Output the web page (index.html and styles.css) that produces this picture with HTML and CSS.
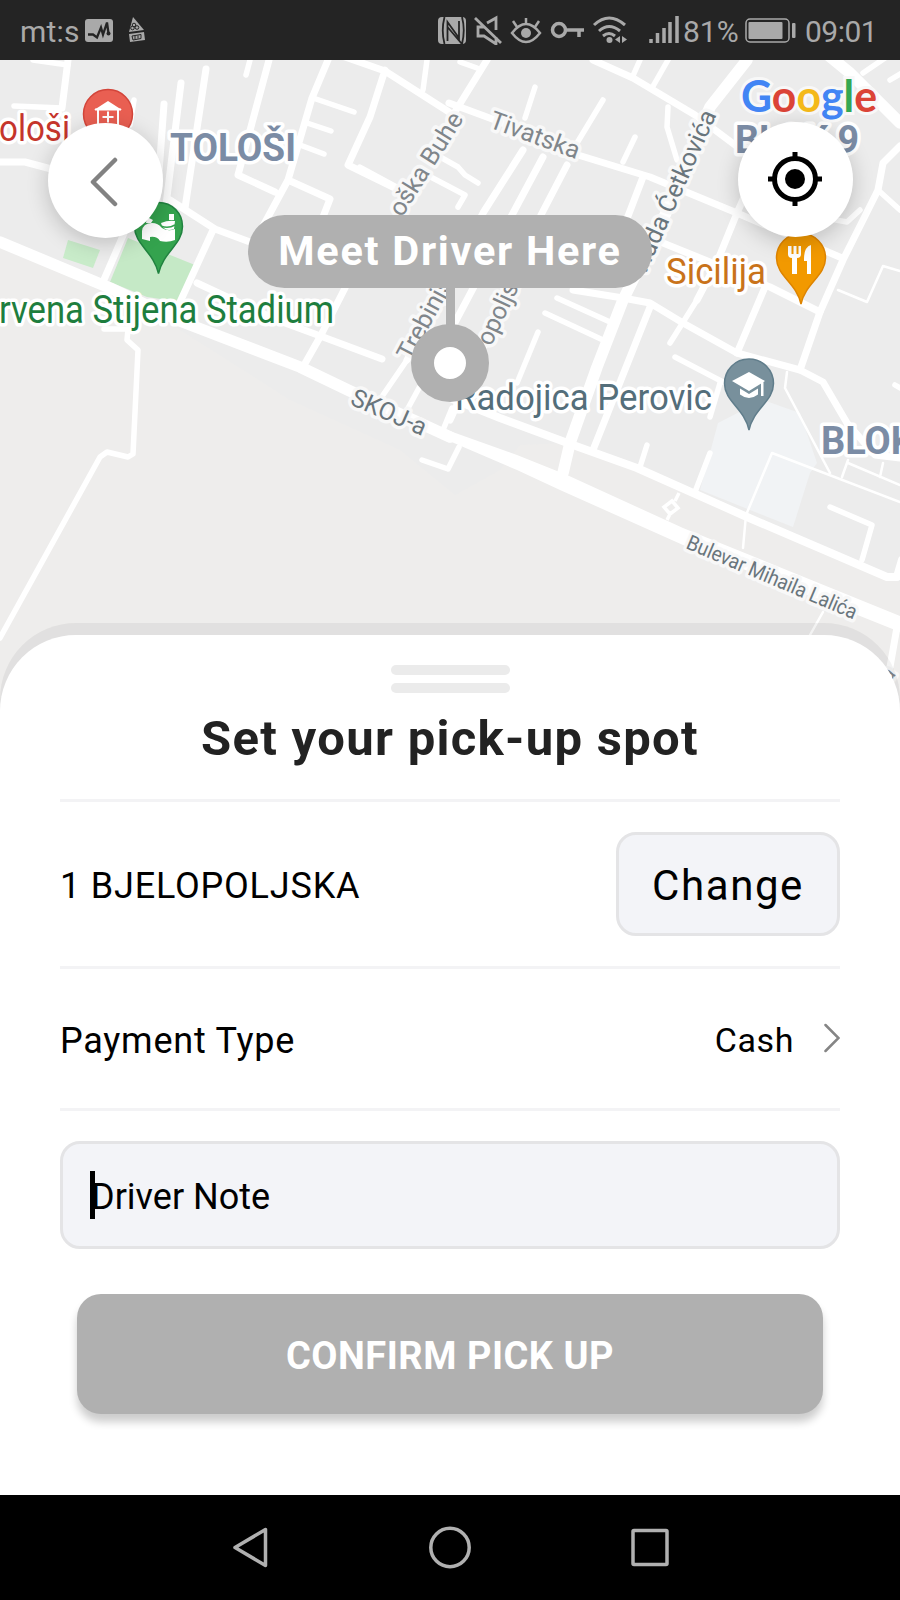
FILE: index.html
```html
<!DOCTYPE html>
<html lang="en">
<head>
<meta charset="utf-8">
<title>Set your pick-up spot</title>
<link rel="stylesheet" href="styles.css">
</head>
<body>
<header class="status">
  <div class="status-group">
    <span class="carrier">mt:s</span>
    <svg class="ic-pulse" width="28" height="23" viewBox="0 0 28 23"><rect width="28" height="23" rx="3" fill="#a9a9a9"/><path d="M3 15.500h5l4 3 4-10 2 7 4-12 1.500 11" fill="none" stroke="#242424" stroke-width="2.300"/><circle cx="23.500" cy="14.500" r="2" fill="#242424"/></svg>
    <svg class="ic-hazard" width="18" height="26" viewBox="0 0 18 26"><path d="M5 0 16 13 1 15z" fill="#a9a9a9"/><g fill="none" stroke="#242424" stroke-width="1"><circle cx="6" cy="8" r="1.800"/><circle cx="4.500" cy="11" r="1.800"/><circle cx="9" cy="10.500" r="1.800"/></g><path d="m1 17 15-2 1 8-15 2z" fill="#a9a9a9"/><path d="m4 19 9-1.500v4L5 23z" fill="none" stroke="#242424"/><path d="M7 19v3m3-3.500v3" stroke="#242424"/></svg>
  </div>
  <div class="status-group">
    <svg width="230" height="30" viewBox="437 15 230 30" fill="none" stroke="#a9a9a9" stroke-width="2.500">
      <rect x="438" y="17" width="28" height="27" rx="4" fill="#a9a9a9" stroke="none"/>
      <path d="M444.500 17q-3.500 13.500 0 27M447.500 41V22l11.500 16V21M462 17q3.500 13 0 27L447.500 27" stroke="#242424" stroke-width="1.800"/>
      <path d="M475 18 501 43M484 27h-6v9h6l12 8V37M487 23l9-5v12" stroke-width="2.800"/>
      <path d="M512 33q14-18 28 0-14 18-28 0zM526 18v6M513 21l4 6M539 21l-4 6"/><circle cx="526" cy="33" r="5" fill="#a9a9a9" stroke="none"/>
      <circle cx="559" cy="30" r="6.500" stroke-width="3.500"/><path d="M566 30h18M579 30v7" stroke-width="3.500"/>
      <path d="M594 25q15-14 31 0M599 31q10-9 21 0M603 36q6-5 12 0" stroke-width="3"/><circle cx="609.500" cy="40" r="3" fill="#a9a9a9" stroke="none"/>
      <path d="M620 36v7l-5-3.500zM622 36v7l5-3.500z" fill="#a9a9a9" stroke="none"/>
      <path d="M651 43v-4M657.500 43V33M664 43V28" stroke-width="3.500"/>
    </svg>
    <svg width="14" height="30" viewBox="667 15 14 30" stroke="#a9a9a9" stroke-width="3.500"><path d="M670 43V22M677 43V16"/></svg>
    <span class="percent">81%</span>
    <svg class="ic-battery" width="52" height="26" viewBox="0 0 52 26"><rect x="1" y="1" width="43" height="23" rx="4" fill="none" stroke="#a9a9a9" stroke-width="1.500"/><rect x="3.500" y="4" width="34" height="17" rx="1" fill="#a9a9a9"/><rect x="47" y="5" width="3.500" height="15" rx="1" fill="#a9a9a9"/></svg>
    <span class="clock">09:01</span>
  </div>
</header>

<main class="map">
  <svg class="map-canvas" width="900" height="660" viewBox="0 60 900 660">
    <rect y="60" width="900" height="660" fill="#ececec"/>
    <path d="M0 242 180 330 290 400 400 450 455 495 500 470 520 445 567 443 900 582V720H0z" fill="#eeedec"/>
    <path d="M718 423 763 400 800 413 817 463 810 473 793 527 700 490z" fill="#f1f3f5"/>
    <path d="M68 240 100 250 93 268 63 258z" fill="#c8ebc9"/>
    <path d="M128 238 195 265 181 302 147 297 110 282z" fill="#c5e9c6"/>

    <g class="road w3">
      <path d="M787 372 785 388 830 473M743 548 746 515 772 453 900 502M848 460 842 477M848 463 900 485M883 463 880 477"/>
      <path d="M838 290 867 302 883 266 900 271"/>
      <path d="M823 612 810 635"/>
    </g>
    <path d="M679 493 675 501M672 501 678 508 670 514 664 507zM670 514 667 520" fill="none" stroke="#fff" stroke-width="3.500"/>
    <g class="road w5">
      <path d="M33 60 68 65M14 106 62 108M134 100 130 125M250 60 246 75M313 98 354 112M307 123 331 131M300 145 324 154"/>
      <path d="M442 158 458 167 465 175 478 183M427 175 465 195 458 207M668 107 667 127 677 160M460 62 477 68M427 60 423 90"/>
      <path d="M640 60 632 78M668 60 652 88M635 137 623 162M557 298 610 322M545 313 603 340M538 332 517 383M675 357 723 382M720 383 710 417"/>
      <path d="M647 445 640 467M710 453 695 492M830 507 872 525 862 560M860 210 847 222 825 218M863 73 885 58M890 80 900 74"/>
      <path d="M422 460 448 469 459 447M878 190 900 210M535 87 525 118M603 100 577 143"/>
      <path d="M104 329H128L127 340 138 350 133 454 128 457 107 452 100 457 0 638"/>
      <path d="M697 300 670 343M895 385 900 388M407 360 383 395M425 377 407 410M452 408 443 430"/>
    </g>
    <g class="road w6">
      <path d="M68 60 62 108M0 162H25L55 170M206 69 185 208M181 83 166 205M164 104 157 200"/>
      <path d="M269 60 238 175 275 192M328 60 312 98 288 180 262 228M288 180 330 199 323 217"/>
      <path d="M345 57 385 71 449 112M385 70 370 117 348 165 395 188M360 168 397 188M487 60 453 115M449 103 495 120 578 155 650 177 737 213 842 258"/>
      <path d="M523 150 483 213 407 360M543 157 512 215 443 345M567 165 541 215 505 300 450 420M643 177 615 250"/>
      <path d="M170 200 215 229 250 242 320 275M213 230 180 302M140 195 122 238 103 282M197 283 277 320 323 337 382 359M345 288 320 337 303 367"/>
      <path d="M593 60 633 78 695 115 735 145 765 165M573 290 623 298 650 303 683 323 737 353 800 370 823 382 847 423 875 455 900 458"/>
      <path d="M650 307 593 450M745 195 737 213 717 262 697 300M663 243 705 260 770 287 820 312M765 287 737 353"/>
      <path d="M900 146 883 163 878 190 843 260 820 312 800 370M897 627 890 667"/>
    </g>
    <g class="road w8"><path d="M450 398 500 418 573 445 637 468 747 517 887 577 897 577 902 560"/></g>
    <g class="road w10"><path d="M0 242 110 288 180 321 300 367 350 391 450 437"/><path d="M747 60 710 107 665 215 623 300 597 367 570 443 563 473M828 55 850 73 900 123"/></g>
    <path d="M447 430 517 455 567 475 683 528 900 616V632L683 545 560 490 517 470 447 440z" fill="#fff"/>

    <g class="label street">
      <text transform="translate(488 127) rotate(20)" textLength="94" lengthAdjust="spacingAndGlyphs">Tivatska</text>
      <text transform="translate(402 218) rotate(-58)" textLength="117" lengthAdjust="spacingAndGlyphs">oška Buhe</text>
      <text class="dark" transform="translate(644 278) rotate(-66)" textLength="179" lengthAdjust="spacingAndGlyphs">Vlada Ćetkovića</text>
      <text transform="translate(411 362) rotate(-62)" textLength="116" lengthAdjust="spacingAndGlyphs">Trebinjska</text>
      <text transform="translate(491 347) rotate(-65)" textLength="92" lengthAdjust="spacingAndGlyphs">opoljska</text>
      <text class="dark" transform="translate(349 404) rotate(23.600)" textLength="80" lengthAdjust="spacingAndGlyphs">SKOJ-a</text>
      <text class="dark small" transform="translate(685 548) rotate(23)" textLength="183" lengthAdjust="spacingAndGlyphs">Bulevar Mihaila Lalića</text>
      <text class="small" transform="translate(889 683) rotate(-50)">a</text>
    </g>
    <g class="label place">
      <text x="-1" y="141" textLength="71" lengthAdjust="spacingAndGlyphs" fill="#c5352c">ološi</text>
      <text class="big" x="-1" y="322.500" textLength="335" lengthAdjust="spacingAndGlyphs" fill="#1e7e3e">rvena Stijena Stadium</text>
      <text x="666" y="284" textLength="100" lengthAdjust="spacingAndGlyphs" fill="#c9731a">Sicilija</text>
      <text x="455" y="410" textLength="257" lengthAdjust="spacingAndGlyphs" fill="#546e7a">Radojica Perovic</text>
    </g>
    <g class="label district">
      <text x="170" y="160.500" textLength="126" lengthAdjust="spacingAndGlyphs">TOLOŠI</text>
      <text x="735" y="153" textLength="124" lengthAdjust="spacingAndGlyphs">BLOK 9</text>
      <text x="821" y="453.500">BLOK</text>
    </g>
    <text class="google" x="741" y="111.500" textLength="136" lengthAdjust="spacingAndGlyphs"><tspan fill="#4285f4">G</tspan><tspan fill="#db4437">o</tspan><tspan fill="#f4b91a">o</tspan><tspan fill="#4285f4">g</tspan><tspan fill="#34a853">l</tspan><tspan fill="#db4437">e</tspan></text>

    <circle cx="108" cy="114" r="24.500" fill="#e95f52" stroke="#d3453a" stroke-width="1.500"/>
    <path d="M94 110 108 101 122 110z" fill="#fff"/><path d="M98 109V128M118 109V128M108 111.500v11M102.500 117h11M95 109.500h26" fill="none" stroke="#fff" stroke-width="2"/>
    <path d="M158.500 202.500c-14 0-24 11-24 24 0 18 19 25 24 47 5-22 24-29 24-47 0-13-10-24-24-24z" fill="#34a34e" stroke="#218340" stroke-width="1.500"/>
    <path d="M142 231q1-8 10-8 6 0 10 5 6 4 13 1v11q-7 3-15 1-3-5-10-4v4l-8-2zM161 223q7-3 14-2l-1 8q-8 3-12-3zM169 214h5v6h-5zM147 217l6 3-2 3h-5z" fill="#fff"/>
    <path d="M161 226q7 3 14-1" fill="none" stroke="#34a34e" stroke-width="1.500"/>
    <path d="M801 233.500c-14 0-24.500 11-24.500 24.500 0 18 20 25 24.500 46 4.500-21 24.500-28 24.500-46 0-13.500-10.500-24.500-24.500-24.500z" fill="#f29900" stroke="#de8400" stroke-width="1.500"/>
    <path d="M788 246v8q0 4 4 4v16h5v-16q4 0 4-4v-8h-2.500v8h-2v-8h-3v8h-2v-8zM804 259q0-12 7-14v29h-4v-13h-3z" fill="#fff"/>
    <path d="M749 359c-14 0-24.500 11-24.500 24.500 0 18 20 25 24.500 46.500 4.500-21.500 24.500-28.500 24.500-46.500 0-13.500-10.500-24.500-24.500-24.500z" fill="#78909c" stroke="#607d8b" stroke-width="1.500"/>
    <path d="m732 381 17-9 16 9-16 10zM740 388.500l9 5.500 9-5.500v6q-9 7-18 0zM761 382h2.500v14H761z" fill="#fff"/>
  </svg>

  <button class="round back" aria-label="Back"><svg width="30" height="52" viewBox="0 0 30 52"><path d="M25 4 3 26l22 22" fill="none" stroke="#828282" stroke-width="4.500" stroke-linejoin="round" stroke-linecap="round"/></svg></button>
  <button class="round locate" aria-label="My location"><svg width="56" height="56" viewBox="0 0 56 56"><circle cx="28" cy="28" r="20.500" fill="none" stroke="#000" stroke-width="5"/><circle cx="28" cy="28" r="10" /><path d="M28 1v8M28 47v8M1 28h8M47 28h8" stroke="#000" stroke-width="5"/></svg></button>
  <div class="meet">
    <div class="meet-label">Meet Driver Here</div>
    <div class="meet-stem"></div>
    <div class="meet-dot"></div>
  </div>
</main>

<section class="sheet">
  <div class="handle"></div>
  <div class="handle"></div>
  <h1>Set your pick-up spot</h1>
  <div class="row address"><span class="street-name">1 BJELOPOLJSKA</span><button class="change">Change</button></div>
  <div class="row payment"><span class="pay-label">Payment Type</span><span class="cash">Cash</span><svg width="16" height="30" viewBox="0 0 16 30"><path d="M1.500 2 14.500 15 1.500 28" fill="none" stroke="#858585" stroke-width="2.500" stroke-linecap="round"/></svg></div>
  <div class="note"><span class="caret"></span><span class="note-text">Driver Note</span></div>
  <button class="confirm">CONFIRM PICK UP</button>
</section>

<nav class="nav">
  <svg width="40" height="44" viewBox="0 0 40 44"><path d="M5 21.500 35.500 3.500v36z"/></svg>
  <svg width="44" height="44" viewBox="0 0 44 44"><circle cx="22" cy="21.500" r="19.200"/></svg>
  <svg width="40" height="44" viewBox="0 0 40 44"><rect x="3" y="4.500" width="34" height="34" rx="1"/></svg>
</nav>
</body>
</html>
```
FILE: styles.css
```css
* { box-sizing: border-box; }
body { margin: 0; width: 900px; height: 1600px; overflow: hidden; display: flex; flex-direction: column; background: #fff; font-family: Roboto, sans-serif; color: #000; }
button { font: inherit; border: 0; padding: 0; color: inherit; }
svg { display: block; flex: none; }

.status { height: 60px; flex: none; background: #242424; color: #a9a9a9; display: flex; justify-content: space-between; padding: 0 24px 0 20px; font-size: 30px; line-height: 60px; }
.status-group { display: flex; align-items: center; white-space: nowrap; }
.carrier { width: 65px; padding-top: 3px; letter-spacing: 0.2px; }
.ic-pulse { margin-top: 1px; }
.ic-hazard { margin-left: 15px; }
.percent { width: 59px; margin-left: 2px; padding-top: 3px; }
.ic-battery { margin-left: 3px; margin-top: 1px; }
.clock { margin-left: 8px; padding-top: 3px; width: 72px; text-align: right; letter-spacing: -0.5px; margin-right: -1px; }

.map { position: relative; height: 660px; flex: none; }
.road { fill: none; stroke: #fff; stroke-linecap: round; stroke-linejoin: round; }
.w3 { stroke-width: 2.500; }
.w5 { stroke-width: 5.500; }
.w6 { stroke-width: 7; }
.w8 { stroke-width: 8; }
.w10 { stroke-width: 11.500; }
.label { paint-order: stroke; stroke: #fff; stroke-width: 7px; stroke-linejoin: round; }
.street { font-size: 25px; fill: #80868b; stroke: #f8f8f8; }
.street .dark { fill: #69757c; }
.street .small { font-size: 21px; }
.place { font-size: 36px; }
.place .big { font-size: 38px; }
.district { font-size: 38px; font-weight: 700; fill: #7b8ca5; }
.google { font: 700 44px Lato, sans-serif; paint-order: stroke; stroke: #f8f8f8; stroke-width: 6px; }

.round { position: absolute; width: 115px; height: 115px; border-radius: 50%; background: #fff; display: flex; align-items: center; justify-content: center; box-shadow: 0 5px 22px rgba(0,0,0,.2); }
.back { left: 47.5px; top: 63px; }
.back svg { margin-top: 2px; }
.locate { left: 738px; top: 62px; }
.locate svg { margin: -1px 0 0 -1px; }
.meet { position: absolute; left: 248px; top: 155px; width: 404px; display: flex; flex-direction: column; align-items: center; }
.meet-label { width: 404px; height: 73px; border-radius: 37px; background: #b0b0b0; color: #fff; font-size: 41.500px; line-height: 72px; font-weight: 700; letter-spacing: 1.700px; text-align: center; white-space: nowrap; }
.meet-stem { width: 9px; height: 38px; background: #b0b0b0; }
.meet-dot { width: 78px; height: 78px; margin-top: -2px; border: 23px solid #b0b0b0; border-radius: 50%; background: #fff; }

.sheet { position: relative; height: 860px; flex: none; margin-top: -85px; padding: 30px 60px 0; background: #fff; border-radius: 76px 76px 0 0; box-shadow: 0 -12px 0 rgba(0,0,0,.05); display: flex; flex-direction: column; align-items: stretch; }
.handle { width: 119px; height: 10px; border-radius: 5px; background: #ebebeb; align-self: center; margin-bottom: 8px; flex: none; }
h1 { margin: 0; height: 98px; padding-top: 8px; font-size: 49px; line-height: 60px; letter-spacing: 1.300px; color: #222; text-align: center; white-space: nowrap; }
.row { display: flex; flex: none; align-items: center; border-top: 3px solid #f3f3f5; white-space: nowrap; }
.address { height: 167px; font-size: 36px; justify-content: space-between; }
.street-name { letter-spacing: 0.800px; padding-top: 3px; }
.change { width: 224px; height: 104px; border: 3px solid #e4e4e6; border-radius: 20px; background: #f3f4f8; font-size: 42px; letter-spacing: 1.600px; padding: 3px 0 0 0; margin-top: -1px; }
.payment { height: 145px; font-size: 36px; border-bottom: 3px solid #f3f3f5; }
.pay-label { flex: 1; letter-spacing: 0.750px; padding-top: 4px; }
.cash { font-size: 34px; letter-spacing: 0.600px; margin-right: 30px; padding-top: 3px; }
.payment svg { margin-top: -1px; }
.note { height: 108px; border: 3px solid #e4e4e6; border-radius: 20px; background: #f3f4f8; display: flex; align-items: center; padding-left: 27px; font-size: 36px; margin-top: 30px; white-space: nowrap; flex: none; }
.caret { width: 5px; height: 48px; background: #000; }
.note-text { margin-left: -4px; padding-top: 4px; }
.confirm { height: 120px; flex: none; margin: 45px 17px 0; border-radius: 24px; background: #b0b0b0; color: #fff; font-size: 38px; font-weight: 700; letter-spacing: 0.500px; padding-top: 4px; box-shadow: 0 8px 8px rgba(0,0,0,.2); }

.nav { height: 105px; flex: none; background: #000; display: flex; align-items: center; justify-content: space-between; padding: 0 230px; }
.nav svg { fill: none; stroke: #b0b0b0; stroke-width: 3.500; stroke-linejoin: round; }
```
